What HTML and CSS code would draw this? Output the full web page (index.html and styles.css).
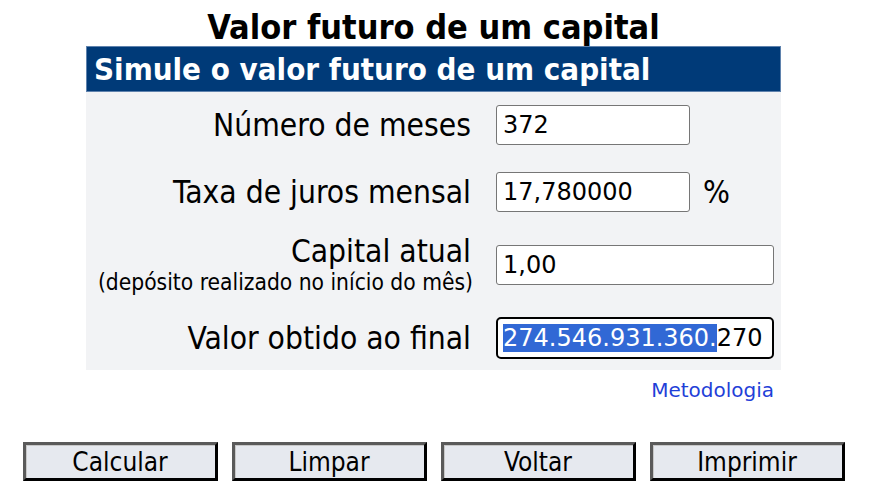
FILE: index.html
```html
<!DOCTYPE html>
<html lang="pt-BR">
<head>
<meta charset="utf-8">
<title>Valor futuro de um capital</title>
<link rel="stylesheet" href="styles.css">
</head>
<body>
<div class="page">
  <h1 class="title">Valor futuro de um capital</h1>
  <div class="panel">
    <div class="panel-head">Simule o valor futuro de um capital</div>
    <div class="form">
      <div class="label">Número de meses</div>
      <div class="field"><div class="input short">372</div></div>

      <div class="label">Taxa de juros mensal</div>
      <div class="field"><div class="input short">17,780000</div><span class="unit">%</span></div>

      <div class="label two">
        <span class="main">Capital atual</span>
        <span class="sub">(depósito realizado no início do mês)</span>
      </div>
      <div class="field"><div class="input wide">1,00</div></div>

      <div class="label">Valor obtido ao final</div>
      <div class="field"><div class="input wide focus"><span class="sel">274.546.931.360.</span>270</div></div>
    </div>
  </div>
  <div class="links"><a class="link" href="#">Metodologia</a></div>
  <div class="buttons">
    <button class="btn">Calcular</button>
    <button class="btn">Limpar</button>
    <button class="btn">Voltar</button>
    <button class="btn">Imprimir</button>
  </div>
</div>
</body>
</html>
```
FILE: styles.css
```css
html, body {
  margin: 0;
  padding: 0;
  background: #ffffff;
}
body {
  font-family: "DejaVu Sans Condensed", "DejaVu Sans", sans-serif;
  color: #000;
}
.page {
  width: 867px;
  display: flex;
  flex-direction: column;
  align-items: center;
}
.title {
  margin: 8px 0 0 0;
  font-size: 34px;
  line-height: 38px;
  font-weight: bold;
  text-align: center;
}
.panel {
  width: 695px;
  background: #f2f3f5;
}
.panel-head {
  height: 44px;
  background: #003a78;
  border: 1px solid #5f82ad;
  color: #fff;
  font-weight: bold;
  font-size: 31px;
  line-height: 44px;
  padding-left: 7px;
}
.form {
  display: grid;
  grid-template-columns: 385px 1fr;
  grid-template-rows: 66px 67px 80px 65px;
  column-gap: 25px;
  align-items: center;
}
.label {
  text-align: right;
  font-size: 31.5px;
  line-height: 34px;
}
.label.two {
  display: flex;
  flex-direction: column;
  align-items: flex-end;
}
.label .main {
  font-size: 31.5px;
  line-height: 34px;
}
.label .sub {
  font-size: 22.6px;
  line-height: 28px;
  margin-right: -2px;
}
.field {
  display: flex;
  align-items: center;
}
.input {
  box-sizing: border-box;
  height: 40px;
  background: #fff;
  border: 1px solid #767676;
  border-radius: 3px;
  font-family: "DejaVu Sans", sans-serif;
  font-size: 24px;
  line-height: 38px;
  padding-left: 6px;
  white-space: nowrap;
  overflow: hidden;
}
.input.short { width: 194px; }
.input.wide { width: 278px; }
.input.focus {
  height: 42px;
  border: 2px solid #000;
  border-radius: 5px;
  box-shadow: inset 0 0 0 1px #fff;
  line-height: 38px;
  padding-left: 5px;
}
.sel {
  background: #3168d5;
  color: #fff;
}
.unit {
  margin-left: 13px;
  font-size: 31.5px;
}
.links {
  width: 695px;
  display: flex;
  justify-content: flex-end;
  margin-top: 8px;
}
.link {
  font-family: "DejaVu Sans", sans-serif;
  font-size: 20px;
  color: #1f3fd8;
  text-decoration: none;
  margin-right: 7px;
}
.buttons {
  display: flex;
  gap: 14px;
  margin-top: 40px;
}
.btn {
  box-sizing: border-box;
  width: 195px;
  height: 39px;
  background: #e6e9ef;
  border: 3px solid;
  border-color: #5a5a5a #000 #000 #5a5a5a;
  box-shadow: inset 1px 1px 0 #c8c8c8;
  font-family: "DejaVu Sans Condensed", "DejaVu Sans", sans-serif;
  font-size: 26px;
  line-height: 30px;
  color: #000;
  padding: 0;
}
```
